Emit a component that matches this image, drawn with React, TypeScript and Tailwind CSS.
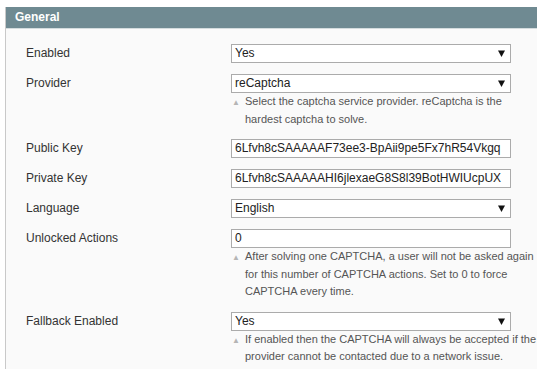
import React from "react";

const font = { fontFamily: '"Liberation Sans", Arial, sans-serif' };

function Arrow() {
  return (
    <svg width="7" height="7" viewBox="0 0 7 7" className="absolute right-[5px] top-[5px]">
      <path d="M0 0.5 H7 L3.5 7 Z" fill="#111" />
    </svg>
  );
}

function Field({ value, select }: { value: string; select?: boolean }) {
  return (
    <div className="relative h-[19px] w-[280px] border border-[#ababab] bg-white pl-[3px] text-[12px] leading-[17px] text-[#222] whitespace-nowrap overflow-hidden">
      {value}
      {select && <Arrow />}
    </div>
  );
}

function Note({ lines }: { lines: string[] }) {
  return (
    <div className="relative w-[300px] pl-[14px] text-[11px] leading-[17.5px] text-[#555] whitespace-nowrap">
      <span className="absolute left-[1px] top-[1px] text-[8px] text-[#b5b5b5]">▲</span>
      {lines.map((l, i) => (
        <div key={i}>{l}</div>
      ))}
    </div>
  );
}

function Row({
  label,
  value,
  select,
  note,
}: {
  label: string;
  value: string;
  select?: boolean;
  note?: string[];
}) {
  return (
    <div className="flex mb-[11px]">
      <div className="w-[225px] pl-[20px] text-[12px] leading-[19px] text-[#333]">{label}</div>
      <div className="flex flex-col">
        <Field value={value} select={select} />
        {note && <Note lines={note} />}
      </div>
    </div>
  );
}

export default function App() {
  return (
    <div className="w-[537px] h-[369px] bg-white pt-[7px] pl-[5px] overflow-hidden" style={font}>
      <div className="h-[362px] bg-[#fafafa] border-l border-[#c9c9c9]">
        <div className="h-[22px] bg-[#6f8a92] border-b border-[#d4dcde] pl-[9px] text-[12px] font-bold leading-[21px] text-white">
          General
        </div>
        <div className="pt-[15px]">
          <Row label="Enabled" value="Yes" select />
          <Row
            label="Provider"
            value="reCaptcha"
            select
            note={["Select the captcha service provider. reCaptcha is the", "hardest captcha to solve."]}
          />
          <Row label="Public Key" value="6Lfvh8cSAAAAAF73ee3-BpAii9pe5Fx7hR54Vkgq" />
          <Row label="Private Key" value="6Lfvh8cSAAAAAHI6jlexaeG8S8l39BotHWIUcpUX" />
          <Row label="Language" value="English" select />
          <Row
            label="Unlocked Actions"
            value="0"
            note={[
              "After solving one CAPTCHA, a user will not be asked again",
              "for this number of CAPTCHA actions. Set to 0 to force",
              "CAPTCHA every time.",
            ]}
          />
          <Row
            label="Fallback Enabled"
            value="Yes"
            select
            note={[
              "If enabled then the CAPTCHA will always be accepted if the",
              "provider cannot be contacted due to a network issue.",
            ]}
          />
        </div>
      </div>
    </div>
  );
}
